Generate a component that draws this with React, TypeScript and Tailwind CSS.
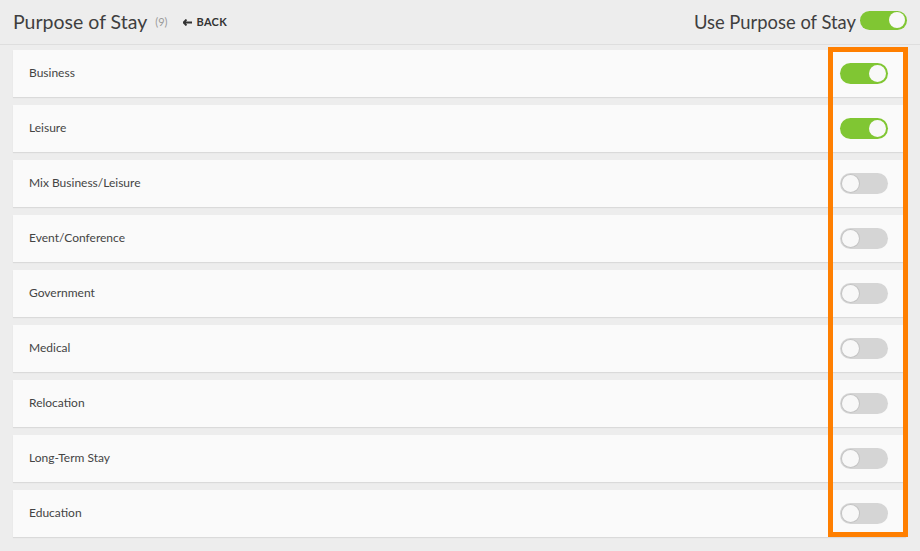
import React from 'react';

const items: { label: string; on: boolean }[] = [
  { label: 'Business', on: true },
  { label: 'Leisure', on: true },
  { label: 'Mix Business/Leisure', on: false },
  { label: 'Event/Conference', on: false },
  { label: 'Government', on: false },
  { label: 'Medical', on: false },
  { label: 'Relocation', on: false },
  { label: 'Long-Term Stay', on: false },
  { label: 'Education', on: false },
];

function Toggle({ on, small }: { on: boolean; small?: boolean }) {
  return (
    <div
      className={`flex items-center rounded-full p-[2px] ${small ? 'w-[47px] h-[19px]' : 'w-[48px] h-[21px]'} ${
        on ? 'bg-[#80c633] justify-end' : 'bg-[#d5d5d5] justify-start'
      }`}
    >
      <div
        className={`rounded-full bg-[#f8f8f8] ${small ? 'w-[16px] h-[16px]' : 'w-[17px] h-[17px]'} ${
          on ? '' : 'shadow-[0_0_0_1px_#c4c4c4]'
        }`}
      />
    </div>
  );
}

export default function App() {
  return (
    <div
      className="relative w-[920px] h-[551px] overflow-hidden bg-[#ededed] text-[#444]"
      style={{ fontFamily: 'Lato, "Open Sans", sans-serif' }}
    >
      {/* Header */}
      <div className="h-[45px] flex items-center justify-between pl-[13px] pr-[13px] border-b border-[#dedede]">
        <div className="flex items-center">
          <span className="text-[19.5px] leading-none text-[#3f3f3f]">Purpose of Stay</span>
          <span className="ml-[8px] text-[11px] text-[#9a9a9a] mt-[1px]">(9)</span>
          <span className="ml-[15px] flex items-center gap-[5px] text-[11px] font-bold text-[#333] tracking-wide mt-[1px]">
            <svg width="9" height="7" viewBox="0 0 9 7">
              <path d="M3.5 0.5 L0.5 3.5 L3.5 6.5 M0.5 3.5 H9" stroke="#333" strokeWidth="1.8" fill="none" />
            </svg>
            BACK
          </span>
        </div>
        <div className="flex items-center gap-[4px] mt-[1px]">
          <span className="text-[18.4px] text-[#3f3f3f]">Use Purpose of Stay</span>
          <div className="-mt-[4px]">
            <Toggle on small />
          </div>
        </div>
      </div>

      {/* List */}
      <div className="flex flex-col gap-[8px] pt-[5px] pl-[13px] pr-[14px]">
        {items.map((it) => (
          <div
            key={it.label}
            className="h-[47px] flex items-center justify-between bg-[#fafafa] pl-[16px] pr-[18px] shadow-[0_1px_1px_rgba(0,0,0,0.08)]"
          >
            <span className="text-[12px] text-[#444] -mt-[2px]">{it.label}</span>
            <Toggle on={it.on} />
          </div>
        ))}
      </div>

      {/* Highlight annotation */}
      <div className="absolute left-[828px] top-[47px] w-[80px] h-[490px] border-[5px] border-[#ff7f00]" />
    </div>
  );
}
